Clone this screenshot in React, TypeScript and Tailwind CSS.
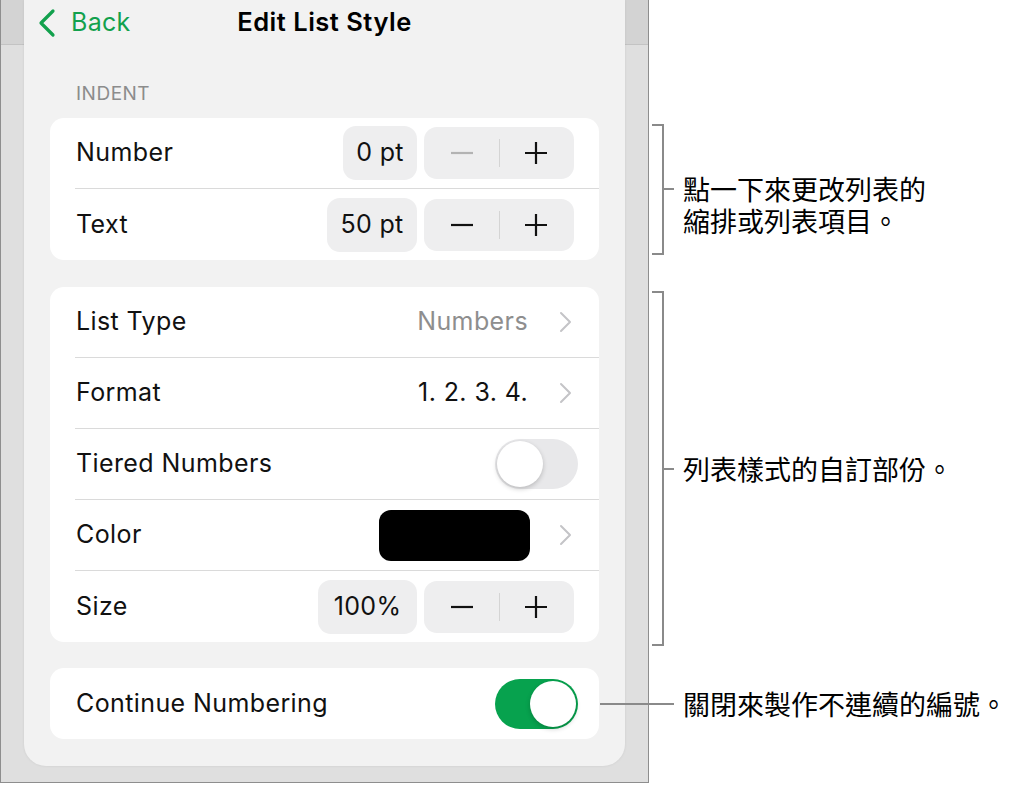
import React from "react";

const UI = { fontFamily: "Inter, 'Liberation Sans', sans-serif" };
const CJK = { fontFamily: "'Noto Sans CJK TC', 'Noto Sans CJK SC', sans-serif" };

function Chevron() {
  return (
    <svg width="13" height="22" viewBox="0 0 13 22" className="shrink-0">
      <path d="M2 2 L11 11 L2 20" fill="none" stroke="#c4c4c7" strokeWidth="2" strokeLinecap="round" strokeLinejoin="round" />
    </svg>
  );
}

function Minus({ dim }: { dim?: boolean }) {
  return (
    <svg width="24" height="24" viewBox="0 0 24 24">
      <path d="M1 12 H23" stroke={dim ? "#b3b3b3" : "#111"} strokeWidth="2.2" />
    </svg>
  );
}

function Plus() {
  return (
    <svg width="24" height="24" viewBox="0 0 24 24">
      <path d="M1 12 H23 M12 1 V23" stroke="#111" strokeWidth="2.2" />
    </svg>
  );
}

function Stepper({ value, dim, w }: { value: string; dim?: boolean; w: string }) {
  return (
    <div className="flex items-center gap-[7px]">
      <div className={`h-[54px] ${w} rounded-[13px] bg-[#eeeeef] flex items-center justify-center text-[25px] tracking-[0.3px] text-[#111]`}>
        {value}
      </div>
      <div className="h-[52px] w-[150px] rounded-[13px] bg-[#eeeeef] flex items-center">
        <div className="flex-1 flex items-center justify-center pl-[2px]">
          <Minus dim={dim} />
        </div>
        <div className="w-px h-[28px] bg-[#d4d4d4]" />
        <div className="flex-1 flex items-center justify-center pr-[2px]">
          <Plus />
        </div>
      </div>
    </div>
  );
}

function Toggle({ on }: { on?: boolean }) {
  return (
    <div
      className={`w-[83px] h-[50px] rounded-full p-[2px] flex items-center -mr-[4px] ${
        on ? "bg-[#07a24e] justify-end" : "bg-[#e8e8ea] justify-start"
      }`}
    >
      <div className="w-[46px] h-[46px] rounded-full bg-white shadow-[0_2px_5px_rgba(0,0,0,0.2)]" />
    </div>
  );
}

function Row({ label, last, children }: { label: string; last?: boolean; children?: React.ReactNode }) {
  return (
    <div className="pl-[25px] h-[71px]">
      <div className={`h-full flex items-center justify-between pr-[25px] ${last ? "" : "border-b border-[#dadada]"}`}>
        <span className="pl-px text-[25px] tracking-[0.4px] text-[#111]">{label}</span>
        {children}
      </div>
    </div>
  );
}

export default function App() {
  return (
    <div className="flex w-[1020px] h-[785px] bg-white" style={UI}>
      <div className="w-[649px] h-[783px] shrink-0 border-l border-r border-b border-[#8e8e8e] bg-[linear-gradient(to_bottom,#d3d3d3_0px,#d3d3d3_44px,#c3c3c3_44px,#c3c3c3_45px,#dfdfdf_45px)]">
        <div className="ml-[23px] w-[601px] h-[766px] bg-[#f2f2f2] rounded-b-[22px] flex flex-col px-[26px] shadow-[0_0_3px_rgba(0,0,0,0.08)]">
          <div className="h-[45px] -mx-[26px] grid grid-cols-[1fr_auto_1fr] items-center">
            <div className="flex items-center pl-[14px] gap-[15px] text-[#12a14d]">
              <svg width="18" height="30" viewBox="0 0 18 30">
                <path d="M15 3 L3 15 L15 27" fill="none" stroke="#12a14d" strokeWidth="3.2" strokeLinecap="round" strokeLinejoin="round" />
              </svg>
              <span className="text-[25px] tracking-[0.3px]">Back</span>
            </div>
            <div className="text-[25.5px] font-semibold tracking-[0.5px] text-black">Edit List Style</div>
            <div />
          </div>

          <div className="mt-[38px] pl-[26px] text-[19px] leading-[22px] tracking-[0.5px] text-[#8c8c8c]">INDENT</div>

          <div className="mt-[13px] bg-white rounded-[14px]">
            <Row label="Number">
              <Stepper value="0 pt" dim w="w-[74px]" />
            </Row>
            <Row label="Text" last>
              <Stepper value="50 pt" w="w-[90px]" />
            </Row>
          </div>

          <div className="mt-[27px] bg-white rounded-[14px]">
            <Row label="List Type">
              <div className="flex items-center gap-[31px] mr-[2px]">
                <span className="text-[25px] tracking-[0.4px] text-[#8e8e8e]">Numbers</span>
                <Chevron />
              </div>
            </Row>
            <Row label="Format">
              <div className="flex items-center gap-[31px] mr-[2px]">
                <span className="text-[25px] tracking-[0.4px] text-[#111]">1. 2. 3. 4.</span>
                <Chevron />
              </div>
            </Row>
            <Row label="Tiered Numbers">
              <Toggle />
            </Row>
            <Row label="Color">
              <div className="flex items-center gap-[29px] mr-[2px]">
                <div className="w-[151px] h-[51px] rounded-[12px] bg-black" />
                <Chevron />
              </div>
            </Row>
            <Row label="Size" last>
              <Stepper value="100%" w="w-[99px]" />
            </Row>
          </div>

          <div className="mt-[26px] bg-white rounded-[14px]">
            <Row label="Continue Numbering" last>
              <Toggle on />
            </Row>
          </div>
        </div>
      </div>

      <div className="flex flex-col text-[27px] leading-[32px] text-black" style={CJK}>
        <div className="mt-[124px] ml-[3px] flex items-start">
          <div className="w-[12px] h-[131px] border-t-2 border-r-2 border-b-2 border-[#8a8a8a]" />
          <div className="mt-[49px] flex items-start">
            <div className="h-[32px] flex items-center">
              <div className="w-[10px] h-[2px] bg-[#8a8a8a]" />
            </div>
            <div className="ml-[9px]">
              點一下來更改列表的
              <br />
              縮排或列表項目。
            </div>
          </div>
        </div>

        <div className="mt-[36px] ml-[3px] flex items-center">
          <div className="w-[12px] h-[355px] border-t-2 border-r-2 border-b-2 border-[#8a8a8a]" />
          <div className="w-[10px] h-[2px] bg-[#8a8a8a]" />
          <div className="ml-[9px]">列表樣式的自訂部份。</div>
        </div>

        <div className="mt-[42px] flex items-center">
          <div className="relative z-10 -ml-[49px] w-[74px] h-[2px] bg-[#8a8a8a]" />
          <div className="ml-[9px] whitespace-nowrap">關閉來製作不連續的編號。</div>
        </div>
      </div>
    </div>
  );
}
